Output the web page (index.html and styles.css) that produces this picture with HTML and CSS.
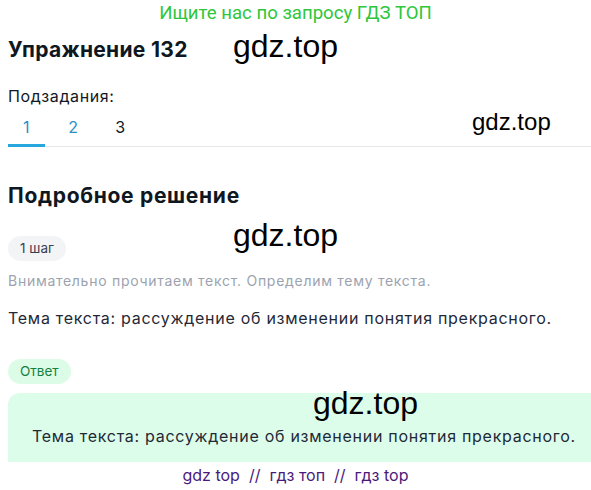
FILE: index.html
```html
<!DOCTYPE html>
<html lang="ru">
<head>
<meta charset="utf-8">
<link rel="stylesheet" href="styles.css">
</head>
<body>
<div class="banner">Ищите нас по запросу ГДЗ ТОП</div>
<div class="page">
  <h1 class="title">Упражнение 132</h1>
  <div class="sub-label">Подзадания:</div>
  <div class="tabs">
    <span class="tab active">1</span>
    <span class="tab link">2</span>
    <span class="tab">3</span>
  </div>
  <h2 class="section">Подробное решение</h2>
  <div class="step-row">
    <span class="pill pill-grey">1 шаг</span>
  </div>
  <p class="hint">Внимательно прочитаем текст. Определим тему текста.</p>
  <p class="text">Тема текста: рассуждение об изменении понятия прекрасного.</p>
  <div class="step-row answer-label">
    <span class="pill pill-green">Ответ</span>
  </div>
  <div class="answer">
    <p class="answer-text">Тема текста: рассуждение об изменении понятия прекрасного.</p>
  </div>
  <div class="footer">gdz top &nbsp;//&nbsp; гдз топ &nbsp;//&nbsp; гдз top</div>
</div>
<span class="wm wm-title">gdz.top</span>
<span class="wm wm-tabs">gdz.top</span>
<span class="wm wm-step">gdz.top</span>
<span class="wm wm-answer">gdz.top</span>
</body>
</html>
```
FILE: styles.css
```css
* { box-sizing: border-box; }
html, body { margin: 0; padding: 0; background: #fff; }
body {
  font-family: Inter, "Noto Sans", sans-serif;
  color: #111827;
  width: 591px;
  height: 490px;
  overflow: hidden;
  position: relative;
  letter-spacing: 0.045em;
}
.banner {
  font-family: Roboto, "Liberation Sans", sans-serif;
  letter-spacing: 0;
  color: #2ec63a;
  font-size: 18.6px;
  text-align: center;
  height: 26px;
  line-height: 26px;
}
.page { padding: 0 0 0 8px; }
.title {
  margin: 10px 0 0;
  font-size: 21px;
  font-weight: 700;
  line-height: 28px;
  letter-spacing: 0.3px;
  color: #0f1720;
}
.sub-label {
  margin-top: 21px;
  font-size: 16px;
  line-height: 22px;
  letter-spacing: 0.6px;
}
.tabs {
  display: flex;
  align-items: flex-end;
  gap: 10px;
  border-bottom: 1px solid #e5e7eb;
  height: 40px;
}
.tab {
  width: 37px;
  text-align: center;
  font-size: 16px;
  line-height: 22px;
  padding-bottom: 8px;
  color: #111827;
}
.tab.active {
  color: #2a8fc7;
  border-bottom: 3px solid #27a7de;
  padding-bottom: 6px;
  margin-bottom: -1px;
}
.tab.link { color: #2a8fc7; }
.section {
  margin: 35px 0 0;
  font-size: 21px;
  font-weight: 700;
  line-height: 28px;
  letter-spacing: 0.7px;
  color: #0f1720;
}
.step-row {
  display: flex;
  margin-top: 26px;
}
.pill {
  display: inline-block;
  border-radius: 13px;
  font-size: 13.5px;
  line-height: 25px;
  padding: 0 12px;
  letter-spacing: 0;
}
.pill-grey { background: #f3f4f6; color: #374151; }
.hint {
  margin: 10px 0 0;
  font-size: 14px;
  color: #9ca3af;
  line-height: 20px;
}
.text {
  margin: 16px 0 0;
  font-size: 16px;
  line-height: 22px;
  color: #1f2937;
}
.answer-label { margin-top: 30px; }
.pill-green {
  background: #dcfce7;
  color: #16803f;
}
.answer {
  margin-top: 9px;
  background: #dcfde9;
  border-radius: 12px 0 0 0;
  height: 69px;
  padding: 32px 0 0 24px;
}
.answer-text {
  margin: 0;
  font-size: 16px;
  line-height: 22px;
  color: #1f2937;
}
.footer {
  text-align: center;
  letter-spacing: 0;
  color: #4a1a7a;
  font-size: 16px;
  line-height: 26px;
  margin-left: -8px;
}
.wm {
  position: absolute;
  font-family: "Liberation Sans", Arial, sans-serif;
  letter-spacing: 0;
  color: #000;
  font-size: 32px;
  line-height: 1;
}
.wm-title { left: 233px; top: 30px; }
.wm-tabs { left: 472px; top: 110px; font-size: 24px; }
.wm-step { left: 233px; top: 219px; }
.wm-answer { left: 313px; top: 387px; }
```
